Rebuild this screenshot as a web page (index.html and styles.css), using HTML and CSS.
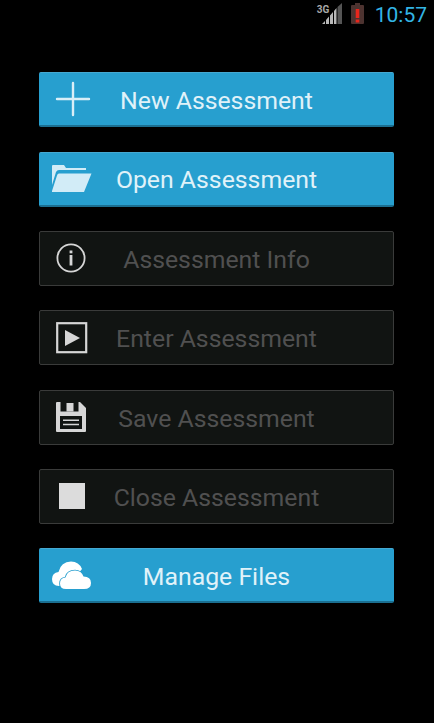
FILE: index.html
```html
<!DOCTYPE html>
<html lang="en">
<head>
  <meta charset="UTF-8">
  <title>Assessment</title>
  <link rel="stylesheet" href="styles.css">
</head>
<body>

  <div class="status-bar">
    <div class="signal">
      <span class="signal-label">3G</span>
      <svg width="20" height="21" viewBox="0 0 20 21">
        <path d="M0 21 L3 18 V21 Z M4 21 V17 L7 13.5 V21 Z M8 21 V12.5 L11 9 V21 Z M12 21 V8 L14.5 5 V21 Z" fill="#b8b8b8"/>
        <path d="M15.5 21 V4 L20 0 V21 Z" fill="#555"/>
      </svg>
    </div>
    <svg class="battery" width="13" height="21" viewBox="0 0 13 21">
      <path d="M4 0 H9 V2 H12 Q13 2 13 3 V20 Q13 21 12 21 H1 Q0 21 0 20 V3 Q0 2 1 2 H4 Z" fill="#4d3330"/>
      <rect x="4.7" y="6" width="3.6" height="9" fill="#e8261c"/>
      <rect x="4.7" y="16.5" width="3.6" height="3" fill="#e8261c"/>
    </svg>
    <span class="clock">10:57</span>
  </div>

  <div class="menu">
    <div class="menu-button active">
      <svg class="icon" width="36" height="36" viewBox="0 0 36 36">
        <path d="M18 2 V34 M2 18 H34" stroke="#d9eef7" stroke-width="2.4" stroke-linecap="round" fill="none"/>
      </svg>
      <span class="label">New Assessment</span>
    </div>

    <div class="menu-button active">
      <svg class="icon wide" width="40" height="27" viewBox="0 0 40 27">
        <path d="M0 1 Q0 0 1 0 H12 L14 3 H34 V5 H7 Q5 5 4 7 L0 20 Z" fill="#d2ecf7"/>
        <path d="M7 8.5 H39.5 L32 27 H0 V26 L5 10.5 Q5.5 8.5 7 8.5 Z" fill="#d2ecf7"/>
      </svg>
      <span class="label">Open Assessment</span>
    </div>

    <div class="menu-button">
      <svg class="icon" width="30" height="30" viewBox="0 0 30 30">
        <circle cx="15" cy="15" r="13.6" stroke="#d6d6d6" stroke-width="1.8" fill="none"/>
        <rect x="13.6" y="7.5" width="2.8" height="2.8" fill="#d6d6d6"/>
        <rect x="13.6" y="12" width="2.8" height="10.5" fill="#d6d6d6"/>
      </svg>
      <span class="label">Assessment Info</span>
    </div>

    <div class="menu-button">
      <svg class="icon" width="32" height="32" viewBox="0 0 32 32">
        <rect x="1.2" y="1.2" width="29" height="29" stroke="#d6d6d6" stroke-width="2.2" fill="none"/>
        <path d="M9 8 L24 16 L9 24 Z" fill="#d6d6d6"/>
      </svg>
      <span class="label">Enter Assessment</span>
    </div>

    <div class="menu-button">
      <svg class="icon" width="30" height="30" viewBox="0 0 30 30">
        <path d="M0 1 Q0 0 1 0 H24 L30 6 V29 Q30 30 29 30 H1 Q0 30 0 29 Z" fill="#d6d6d6"/>
        <rect x="4.5" y="0" width="18" height="9.5" fill="#111412"/>
        <rect x="10.5" y="1" width="7" height="8.5" fill="#d6d6d6"/>
        <rect x="4" y="14" width="22" height="13" fill="#111412"/>
        <path d="M7 18.3 H23 M7 22.5 H23" stroke="#d6d6d6" stroke-width="1.4"/>
      </svg>
      <span class="label">Save Assessment</span>
    </div>

    <div class="menu-button">
      <div class="icon stop-icon"></div>
      <span class="label">Close Assessment</span>
    </div>

    <div class="menu-button active">
      <svg class="icon wide" width="39" height="28" viewBox="0 0 39 28">
        <path d="M7 25 Q0 25 0 18 Q0 12 6.5 11 Q9 0.5 19 0.5 Q27 0.5 30 8 L20 20 Z" fill="#fff"/>
        <path d="M14 28 Q8 28 8 22.5 Q8 17 13.5 16.5 Q15 9.5 23 9.5 Q29.5 9.5 31.5 15.5 Q39 15.5 39 22 Q39 28 32 28 Z" fill="#fff" stroke="#279fcf" stroke-width="1.6" paint-order="stroke"/>
      </svg>
      <span class="label">Manage Files</span>
    </div>
  </div>

</body>
</html>
```

FILE: styles.css
```css
body {
  margin: 0;
  height: 723px;
  overflow: hidden;
  background: #000;
  font-family: Roboto, sans-serif;
}

.status-bar {
  height: 25px;
  padding: 2px 7px 0 0;
  margin-bottom: 45.4px;
  display: flex;
  align-items: center;
  justify-content: flex-end;
}

.signal {
  width: 25px;
  height: 21px;
  margin-top: -3px;
  display: flex;
  justify-content: flex-end;
  position: relative;
}

.signal-label {
  position: absolute;
  left: 0;
  top: 2px;
  font-size: 10px;
  line-height: 10px;
  font-weight: 700;
  color: #a8a8a8;
}

.battery {
  margin: -3px 0 0 9px;
}

.clock {
  margin-left: 11px;
  font-size: 21px;
  color: #33b5e5;
}

.menu {
  margin: 0 40px 0 39px;
  display: grid;
  gap: 24.3px;
}

.menu-button {
  box-sizing: border-box;
  height: 55px;
  border: 1px solid #3a3b3a;
  border-radius: 2px;
  background: #111412;
  color: #505050;
  display: grid;
  grid-template-columns: 1fr auto 1fr;
  align-items: center;
}

.menu-button.active {
  border: none;
  border-top: 1px solid #45a9d2;
  border-bottom: 2px solid #1b6f91;
  background: #279fcf;
  color: #e0f2f9;
}

.label {
  grid-column: 2;
  grid-row: 1;
  padding-top: 2px;
  font-size: 24.8px;
  white-space: nowrap;
}

.icon {
  grid-column: 1;
  grid-row: 1;
  justify-self: start;
  margin-left: 16px;
}

.icon.wide {
  margin-left: 13px;
}

.stop-icon {
  width: 26px;
  height: 26px;
  margin-left: 19px;
  background: #dcdcdc;
}
```
